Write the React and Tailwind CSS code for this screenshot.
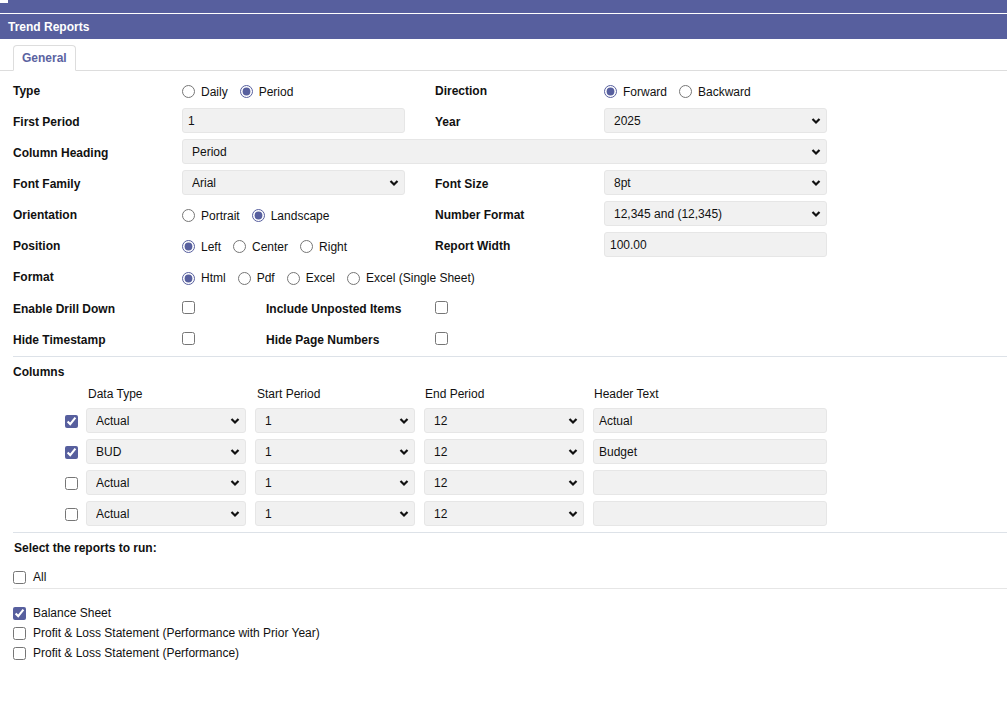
import { useState } from "react";

const font = { fontFamily: '"Liberation Sans", Arial, sans-serif' };

function Chevron() {
    return (
        <svg
            className="pointer-events-none absolute right-[6px] top-1/2 -translate-y-1/2"
            width="10"
            height="7"
            viewBox="0 0 10 7"
        >
            <path d="M1.5 1.5 L5 5 L8.5 1.5" fill="none" stroke="#111" strokeWidth="2.2" />
        </svg>
    );
}

function Select({ value, options, className = "" }) {
    return (
        <div className={`relative h-[25px] ${className}`}>
            <select
                defaultValue={value}
                className="block h-[25px] w-full appearance-none rounded-[3px] border border-[#e6e6e6] bg-[#f1f1f1] pl-[9px] pr-6 text-[12px] leading-[14px] text-[#111] outline-none"
            >
                {options.map((o) => (
                    <option key={o}>{o}</option>
                ))}
            </select>
            <Chevron />
        </div>
    );
}

function TextInput({ value, className = "" }) {
    return (
        <input
            type="text"
            defaultValue={value}
            className={`block h-[25px] rounded-[3px] border border-[#e6e6e6] bg-[#f1f1f1] px-[5px] text-[12px] leading-[14px] text-[#111] outline-none ${className}`}
        />
    );
}

function Radios({ name, items, checked }) {
    return (
        <div className="flex items-center gap-[12px] pt-[4px]">
            {items.map((it) => (
                <label key={it} className="flex items-center gap-[6px] text-[12px] text-[#111]">
                    <input
                        type="radio"
                        name={name}
                        defaultChecked={it === checked}
                        className="m-0 block h-[13px] w-[13px] accent-[#575f9e]"
                    />
                    {it}
                </label>
            ))}
        </div>
    );
}

function Check({ checked }) {
    return (
        <input
            type="checkbox"
            defaultChecked={checked}
            className="m-0 block h-[13px] w-[13px] accent-[#575f9e]"
        />
    );
}

function Label({ children, className = "w-[169px]" }) {
    return <div className={`shrink-0 pt-[2px] text-[12px] font-bold text-[#111] ${className}`}>{children}</div>;
}

function Row({ children, h = "h-[31px]" }) {
    return <div className={`flex items-center ${h}`}>{children}</div>;
}

const periods = ["1", "2", "3", "4", "5", "6", "7", "8", "9", "10", "11", "12"];

export default function App() {
    const [columns] = useState([
        { on: true, type: "Actual", start: "1", end: "12", text: "Actual" },
        { on: true, type: "BUD", start: "1", end: "12", text: "Budget" },
        { on: false, type: "Actual", start: "1", end: "12", text: "" },
        { on: false, type: "Actual", start: "1", end: "12", text: "" },
    ]);

    const reports = [
        { name: "Balance Sheet", on: true },
        { name: "Profit & Loss Statement (Performance with Prior Year)", on: false },
        { name: "Profit & Loss Statement (Performance)", on: false },
    ];

    return (
        <div className="min-h-[722px] w-full bg-white text-[12px] leading-[14px]" style={font}>
            {/* top strip */}
            <div className="relative h-[13px] bg-[#575f9e]">
                <div className="absolute left-0 top-0 h-[3px] w-[8px] bg-white" />
            </div>
            <div className="h-px bg-white" />
            <div className="flex h-[25px] items-center bg-[#575f9e] pl-[8px] text-[12px] font-bold text-white">
                Trend Reports
            </div>

            {/* tabs */}
            <div className="flex border-b border-[#dddddd] pl-[13px] pt-[6px]">
                <div className="-mb-px rounded-t-[4px] border border-b-white border-[#dddddd] bg-white px-[8px] pb-[5px] pt-[5px] text-[12px] font-bold text-[#5b63a1]">
                    General
                </div>
            </div>

            <div className="pl-[13px] pt-[3px]">
                <Row>
                    <Label>Type</Label>
                    <div className="w-[223px]">
                        <Radios name="type" items={["Daily", "Period"]} checked="Period" />
                    </div>
                    <div className="w-[30px]" />
                    <Label>Direction</Label>
                    <Radios name="dir" items={["Forward", "Backward"]} checked="Forward" />
                </Row>
                <Row>
                    <Label>First Period</Label>
                    <TextInput value="1" className="w-[223px]" />
                    <div className="w-[30px]" />
                    <Label>Year</Label>
                    <Select value="2025" options={["2023", "2024", "2025", "2026"]} className="w-[223px]" />
                </Row>
                <Row>
                    <Label>Column Heading</Label>
                    <Select value="Period" options={["Period", "Month", "Date"]} className="w-[645px]" />
                </Row>
                <Row>
                    <Label>Font Family</Label>
                    <Select value="Arial" options={["Arial", "Times New Roman", "Verdana"]} className="w-[223px]" />
                    <div className="w-[30px]" />
                    <Label>Font Size</Label>
                    <Select value="8pt" options={["7pt", "8pt", "9pt", "10pt"]} className="w-[223px]" />
                </Row>
                <Row>
                    <Label>Orientation</Label>
                    <div className="w-[223px]">
                        <Radios name="orient" items={["Portrait", "Landscape"]} checked="Landscape" />
                    </div>
                    <div className="w-[30px]" />
                    <Label>Number Format</Label>
                    <Select
                        value="12,345 and (12,345)"
                        options={["12,345 and (12,345)", "12,345 and -12,345"]}
                        className="w-[223px]"
                    />
                </Row>
                <Row>
                    <Label>Position</Label>
                    <div className="w-[223px]">
                        <Radios name="pos" items={["Left", "Center", "Right"]} checked="Left" />
                    </div>
                    <div className="w-[30px]" />
                    <Label>Report Width</Label>
                    <TextInput value="100.00" className="w-[223px]" />
                </Row>
                <Row h="h-[32px]">
                    <Label>Format</Label>
                    <Radios name="fmt" items={["Html", "Pdf", "Excel", "Excel (Single Sheet)"]} checked="Html" />
                </Row>
                <Row>
                    <Label>Enable Drill Down</Label>
                    <div className="w-[84px]">
                        <Check />
                    </div>
                    <Label>Include Unposted Items</Label>
                    <Check />
                </Row>
                <Row>
                    <Label>Hide Timestamp</Label>
                    <div className="w-[84px]">
                        <Check />
                    </div>
                    <Label>Hide Page Numbers</Label>
                    <Check />
                </Row>

                <div className="mt-[2px] border-t border-[#dde2e8]" />

                <div className="pt-[8px] font-bold text-[#111]">Columns</div>

                <div className="pl-[52px] pt-[8px]">
                    <div className="flex text-[#111]">
                        <div className="w-[22px]" />
                        <div className="w-[169px] pl-[1px]">Data Type</div>
                        <div className="w-[169px] pl-[1px]">Start Period</div>
                        <div className="w-[169px]">End Period</div>
                        <div>Header Text</div>
                    </div>
                    <div className="mt-[7px] flex flex-col gap-[6px]">
                        {columns.map((c, i) => (
                            <div key={i} className="flex items-center">
                                <div className="w-[21px] pt-[2px]">
                                    <Check checked={c.on} />
                                </div>
                                <Select value={c.type} options={["Actual", "BUD"]} className="w-[160px]" />
                                <Select value={c.start} options={periods} className="ml-[9px] w-[160px]" />
                                <Select value={c.end} options={periods} className="ml-[9px] w-[160px]" />
                                <TextInput value={c.text} className="ml-[9px] w-[234px]" />
                            </div>
                        ))}
                    </div>
                </div>

                <div className="mt-[6px] border-t border-[#dde2e8]" />

                <div className="pl-[1px] pt-[8px] font-bold text-[#111]">Select the reports to run:</div>
                <label className="mt-[15px] flex items-center gap-[7px] text-[#111]">
                    <Check />
                    All
                </label>
                <div className="mt-[4px] border-t border-[#e6e6e6]" />
                <div className="flex flex-col gap-[6px] pt-[17px]">
                    {reports.map((r) => (
                        <label key={r.name} className="flex items-center gap-[7px] text-[#111]">
                            <Check checked={r.on} />
                            {r.name}
                        </label>
                    ))}
                </div>
            </div>
        </div>
    );
}
